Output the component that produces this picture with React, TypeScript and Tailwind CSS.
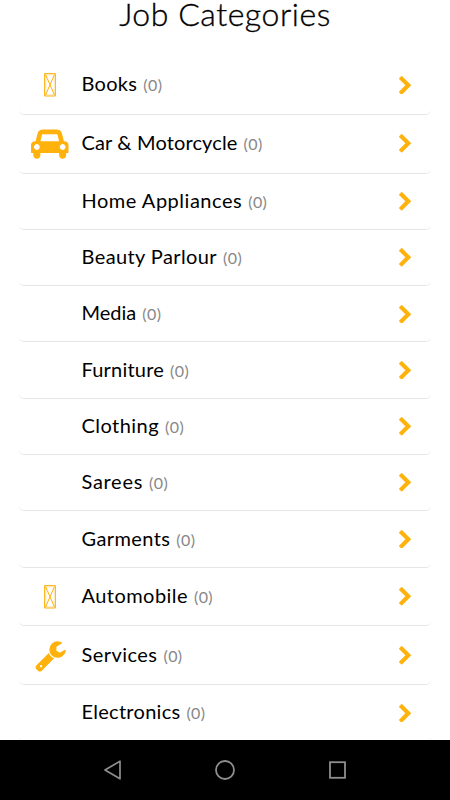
import clsx from 'clsx';

type IconName = 'missing' | 'car' | 'wrench';

interface Category {
  name: string;
  count: number;
  icon?: IconName;
  tracking: string;
}

const categories: Category[] = [
  { name: 'Books', count: 0, icon: 'missing', tracking: 'tracking-[0.3px]' },
  { name: 'Car & Motorcycle', count: 0, icon: 'car', tracking: 'tracking-[0.14px]' },
  { name: 'Home Appliances', count: 0, tracking: 'tracking-[0.52px]' },
  { name: 'Beauty Parlour', count: 0, tracking: 'tracking-[0.4px]' },
  { name: 'Media', count: 0, tracking: 'tracking-[0px]' },
  { name: 'Furniture', count: 0, tracking: 'tracking-[0.2px]' },
  { name: 'Clothing', count: 0, tracking: 'tracking-[0.45px]' },
  { name: 'Sarees', count: 0, tracking: 'tracking-[0.7px]' },
  { name: 'Garments', count: 0, tracking: 'tracking-[0.4px]' },
  { name: 'Automobile', count: 0, icon: 'missing', tracking: 'tracking-[0.45px]' },
  { name: 'Services', count: 0, icon: 'wrench', tracking: 'tracking-[0.45px]' },
  { name: 'Electronics', count: 0, tracking: 'tracking-[0.28px]' },
];

function CategoryIcon({ name }: { name: IconName }) {
  if (name === 'car') {
    return (
      <svg viewBox="0 0 2048 1792" className="w-[37.5px] h-[33px]" fill="currentColor">
        <path d="M480 1088q0-66-47-113t-113-47-113 47-47 113 47 113 113 47 113-47 47-113zm36-320h1016l-89-357q-2-8-14-17.5t-21-9.5h-768q-9 0-21 9.5t-14 17.5zm1372 320q0-66-47-113t-113-47-113 47-47 113 47 113 113 47 113-47 47-113zm160-96v384q0 14-9 23t-23 9h-96v128q0 80-56 136t-136 56-136-56-56-136v-128h-1024v128q0 80-56 136t-136 56-136-56-56-136v-128h-96q-14 0-23-9t-9-23v-384q0-93 65.5-158.5t158.5-65.5h28l105-419q23-94 104-157.5t179-63.5h768q98 0 179 63.5t104 157.5l105 419h28q93 0 158.5 65.5t65.5 158.5z" />
      </svg>
    );
  }
  if (name === 'wrench') {
    return (
      <svg viewBox="0 0 1792 1792" className="size-[33px]" fill="currentColor">
        <path d="M448 1472q0-26-19-45t-45-19-45 19-19 45 19 45 45 19 45-19 19-45zm644-420l-682 682q-37 37-90 37-52 0-91-37l-106-108q-38-36-38-90 0-53 38-91l681-681q39 98 114.5 173.5t173.5 114.5zm634-435q0 39-23 106-47 134-164.5 217.5t-258.5 83.5q-185 0-316.5-131.5t-131.5-316.5 131.5-316.5 316.5-131.5q58 0 121.5 16.5t107.5 46.5q16 11 16 28t-16 28l-293 169v224l193 107q5-3 79-48.5t135.5-81 70.5-35.5q15 0 23.5 10t8.5 25z" />
      </svg>
    );
  }
  return (
    <svg viewBox="0 0 12 24" className="h-6 w-3" fill="none" stroke="currentColor">
      <path d="M.6 .6h10.8v22.4H.6z" strokeWidth="1" />
      <path d="M1.8 1.8h8.4v20H1.8z" strokeWidth="0.3" />
      <path d="M1.5 1.5l9 20.6M10.5 1.5l-9 20.6" strokeWidth="1" />
    </svg>
  );
}

function CategoryRow({ category }: { category: Category }) {
  return (
    <li
      className={clsx(
        'flex shrink-0 items-center rounded-b-[5px] border-b-[1.5px] border-[#e6e6e6] pr-5',
        category.icon ? 'h-[58.8px]' : 'h-[56.3px]'
      )}
    >
      <span className="flex w-[62.5px] justify-center pr-[0.5px] text-[#ffb10c]">
        {category.icon && <CategoryIcon name={category.icon} />}
      </span>
      <span className="flex flex-1 items-baseline gap-1.5 pb-[3px]">
        <span className={clsx('text-[20px] leading-7 text-black', category.tracking)}>{category.name}</span>
        <span className="text-base tracking-[0.4px] text-[#888]">({category.count})</span>
      </span>
      <svg viewBox="346 26 1036 1612" className="h-[18.6px] w-3" fill="#ffb10c">
        <path d="M1363 877l-742 742q-19 19-45 19t-45-19l-166-166q-19-19-19-45t19-45l531-531-531-531q-19-19-19-45t19-45l166-166q19-19 45-19t45 19l742 742q19 19 19 45t-19 45z" />
      </svg>
    </li>
  );
}

function NavigationBar() {
  return (
    <nav className="flex h-[60px] shrink-0 items-center justify-between bg-black px-[103px] text-[#8e8e8e]">
      <svg viewBox="0 0 20 20" className="size-5" fill="none" stroke="currentColor" strokeWidth="1.7" strokeLinejoin="round">
        <path d="M17 1.2v17.6L2 10z" />
      </svg>
      <svg viewBox="0 0 20 20" className="size-5" fill="none" stroke="currentColor" strokeWidth="1.8">
        <circle cx="10" cy="10" r="9" />
      </svg>
      <svg viewBox="0 0 20 20" className="size-5" fill="none" stroke="currentColor" strokeWidth="1.8">
        <rect x="3" y="2.2" width="15" height="15.6" />
      </svg>
    </nav>
  );
}

export default function App() {
  return (
    <div className="flex h-[800px] w-[450px] flex-col overflow-hidden bg-white font-['Lato','Noto_Sans',sans-serif]">
      <main className="flex min-h-0 flex-1 flex-col">
        <h1 className="h-[56px] shrink-0 text-center text-[32px] leading-[28px] font-light tracking-[0.55px] whitespace-nowrap text-black [-webkit-text-stroke:0.35px_black]">
          Job Categories
        </h1>
        <ul className="flex min-h-0 flex-1 flex-col overflow-hidden px-[19px]">
          {categories.map((category) => (
            <CategoryRow key={category.name} category={category} />
          ))}
        </ul>
      </main>
      <NavigationBar />
    </div>
  );
}
